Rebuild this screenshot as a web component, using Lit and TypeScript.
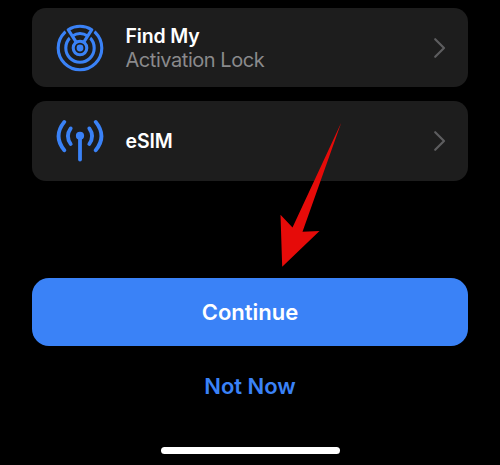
import { LitElement, html, css, svg } from "lit";
import { customElement, property } from "lit/decorators.js";

const findMyIcon = svg`
  <g fill="none" stroke="#3a82f7" stroke-width="3.1">
    <circle r="21.8" />
    <circle r="14.2" />
    <path d="M0 0L-14.2 -21.8H14.2Z" fill="#1d1d1d" stroke="#1d1d1d" stroke-width="6.4" />
    <path d="M-4.1 -6.4L-11.8 -18.3A21.8 21.8 0 0 1 11.8 -18.3L4.1 -6.4" stroke-linejoin="round" />
    <path d="M-7.7 -12A14.2 14.2 0 0 1 7.7 -12" />
    <circle r="6.8" fill="#1d1d1d" />
  </g>
  <circle r="3.4" fill="#3a82f7" />`;

const esimIcon = svg`
  <g fill="none" stroke="#3a82f7" stroke-width="3.8" stroke-linecap="round">
    <path d="M0 -5V18.6" />
    <path d="M-15.7 -19.1Q-27.2 -4.8 -15.7 9.2M15.7 -19.1Q27.2 -4.8 15.7 9.2" />
    <path d="M-9.3 -12.6Q-14.9 -4.8 -9.3 3M9.3 -12.6Q14.9 -4.8 9.3 3" />
  </g>
  <circle cy="-5.2" r="4.1" fill="#3a82f7" />`;

@customElement("setup-row")
export class SetupRow extends LitElement {
  @property() heading = "";
  @property() detail = "";
  @property() icon = "";

  static styles = css`
    :host {
      display: flex;
      align-items: center;
      box-sizing: border-box;
      height: 79.7px;
      padding: 0 22px 0 23px;
      border-radius: 14px;
      background: #1d1d1d;
    }
    .icon { flex: none; width: 50px; height: 50px; }
    .text { flex: 1; margin-left: 20.5px; line-height: 24px; font-size: 19.5px; }
    .heading { color: #fff; font-weight: 600; letter-spacing: -0.15px; }
    .detail { color: #8a8a8c; font-size: 20px; letter-spacing: -0.45px; }
    .chevron { flex: none; width: 13px; height: 22px; }
  `;

  render() {
    return html`
      <svg class="icon" viewBox="-25 -25 50 50">
        ${this.icon === "find-my" ? findMyIcon : esimIcon}
      </svg>
      <div class="text">
        <div class="heading">${this.heading}</div>
        ${this.detail ? html`<div class="detail">${this.detail}</div>` : ""}
      </div>
      <svg class="chevron" viewBox="0 0 13 22">
        <path d="M2.2 2.2L11 11L2.2 19.8" fill="none" stroke="#5d5d5f" stroke-width="2.2" stroke-linecap="round" stroke-linejoin="round" />
      </svg>
    `;
  }
}

@customElement("app-root")
export class AppRoot extends LitElement {
  static styles = css`
    :host {
      display: flex;
      flex-direction: column;
      position: relative;
      box-sizing: border-box;
      width: 500px;
      height: 465px;
      padding: 7.8px 32px 0;
      overflow: hidden;
      background: #000;
      font-family: Inter, "Liberation Sans", sans-serif;
    }
    .rows { display: flex; flex-direction: column; gap: 13.6px; }
    button {
      border: 0;
      padding: 0;
      font: 600 22px/28px Inter, "Liberation Sans", sans-serif;
    }
    .continue {
      flex: none;
      height: 67.5px;
      margin-top: 97.7px;
      border-radius: 17px;
      background: #3a82f7;
      color: #fff;
    }
    .later {
      align-self: center;
      margin-top: 26.5px;
      background: none;
      color: #3a82f7;
    }
    .home {
      align-self: center;
      width: 179px;
      height: 7px;
      margin: 47px 0 0 1px;
      border-radius: 4px;
      background: #fff;
    }
    .arrow {
      position: absolute;
      left: 278px;
      top: 120px;
      width: 66px;
      height: 150px;
    }
  `;

  render() {
    return html`
      <div class="rows">
        <setup-row icon="find-my" heading="Find My" detail="Activation Lock"></setup-row>
        <setup-row icon="esim" heading="eSIM"></setup-row>
      </div>
      <button class="continue">Continue</button>
      <button class="later">Not Now</button>
      <div class="home"></div>
      <svg class="arrow" viewBox="278 120 66 150">
        <path d="M341.3 122.5L302.5 231.8L319.5 231L282.2 266.8L280.5 214.8L292.5 227.5Z" fill="#e60b09" />
      </svg>
    `;
  }
}
